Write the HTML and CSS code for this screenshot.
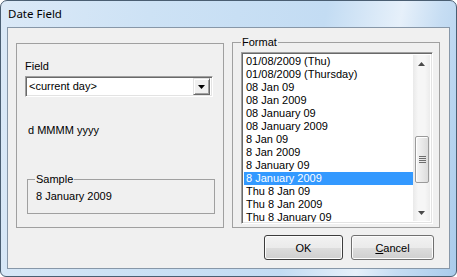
FILE: index.html
```html
<!DOCTYPE html>
<html>
<head>
<meta charset="utf-8">
<link rel="stylesheet" href="styles.css">
</head>
<body>
<div class="window">
  <div class="titlebar">Date Field</div>
  <div class="client">
    <div class="panels">
      <div class="panel-left">
        <div class="label">Field</div>
        <div class="combo">
          <span class="combo-text">&lt;current day&gt;</span>
          <span class="combo-btn"><svg width="7" height="4" viewBox="0 0 7 4"><path d="M0 0h7L3.5 4z" fill="#000"/></svg></span>
        </div>
        <div class="fmt">d MMMM yyyy</div>
        <fieldset class="sample">
          <legend>Sample</legend>
          <div class="sample-text">8 January 2009</div>
        </fieldset>
      </div>
      <fieldset class="format">
        <legend>Format</legend>
        <div class="listbox">
          <div class="items">
            <div class="item">01/08/2009 (Thu)</div>
            <div class="item">01/08/2009 (Thursday)</div>
            <div class="item">08 Jan 09</div>
            <div class="item">08 Jan 2009</div>
            <div class="item">08 January 09</div>
            <div class="item">08 January 2009</div>
            <div class="item">8 Jan 09</div>
            <div class="item">8 Jan 2009</div>
            <div class="item">8 January 09</div>
            <div class="item selected">8 January 2009</div>
            <div class="item">Thu 8 Jan 09</div>
            <div class="item">Thu 8 Jan 2009</div>
            <div class="item">Thu 8 January 09</div>
          </div>
          <div class="scrollbar">
            <div class="arrow"><svg width="7" height="4" viewBox="0 0 7 4"><path d="M3.5 0L7 4H0z" fill="#4a4a4a"/></svg></div>
            <div class="track">
              <div class="thumb">
                <span class="grip"></span><span class="grip"></span><span class="grip"></span><span class="grip"></span>
              </div>
            </div>
            <div class="arrow"><svg width="7" height="4" viewBox="0 0 7 4"><path d="M0 0h7L3.5 4z" fill="#4a4a4a"/></svg></div>
          </div>
        </div>
      </fieldset>
    </div>
    <div class="buttons">
      <div class="btn btn-ok">OK</div>
      <div class="btn btn-cancel"><u>C</u>ancel</div>
    </div>
  </div>
</div>
</body>
</html>
```
FILE: styles.css
```css
html, body {
  margin: 0;
  padding: 0;
  background: #ffffff;
}

.window {
  width: 457px;
  height: 277px;
  box-sizing: border-box;
  border: 1px solid #4a5e72;
  border-radius: 7px 7px 6px 6px;
  background: linear-gradient(100deg, #dbe9f7 0%, #cde2f5 30%, #c3dcf3 65%, #e6f0fa 80%, #c6ddf3 88%, #a9cbeb 100%);
  overflow: hidden;
  display: flex;
  flex-direction: column;
  font-family: "Liberation Sans", Arial, sans-serif;
  font-size: 11px;
  color: #000;
}

.titlebar {
  height: 26px;
  line-height: 26px;
  padding-left: 7px;
  font-family: "Noto Sans", "Open Sans", sans-serif;
  font-size: 11.5px;
  color: #000;
}

.client {
  margin: 0 6px;
  height: 242px;
  box-sizing: border-box;
  border: 1px solid #8797a8;
  background: #f0f0f0;
  padding: 8px 8px 0 8px;
  display: flex;
  flex-direction: column;
}

.panels {
  display: flex;
  align-items: flex-start;
  gap: 8px;
}

.panel-left {
  margin-top: 7px;
  width: 208px;
  height: 185px;
  box-sizing: border-box;
  border: 1px solid #a0a0a0;
  padding: 16px 0 0 8px;
}

.label {
  line-height: 13px;
}

.combo {
  margin-top: 3px;
  width: 188px;
  height: 21px;
  box-sizing: border-box;
  border-top: 1px solid #a0a0a0;
  border-left: 1px solid #a0a0a0;
  border-right: 1px solid #ffffff;
  border-bottom: 1px solid #ffffff;
  box-shadow: inset 1px 1px 0 #696969, inset -1px -1px 0 #e3e3e3;
  background: #ffffff;
  display: flex;
  align-items: center;
  padding: 2px 2px 2px 3px;
}

.combo-text {
  flex: 1;
  line-height: 13px;
}

.combo-btn {
  width: 17px;
  height: 17px;
  box-sizing: border-box;
  background: #f0f0f0;
  border-top: 1px solid #e3e3e3;
  border-left: 1px solid #e3e3e3;
  border-right: 1px solid #696969;
  border-bottom: 1px solid #696969;
  box-shadow: inset 1px 1px 0 #ffffff, inset -1px -1px 0 #a0a0a0;
  display: flex;
  align-items: center;
  justify-content: center;
}

.fmt {
  margin-top: 27px;
  margin-left: 3px;
  line-height: 13px;
}

fieldset {
  margin: 0;
  border: 1px solid #a0a0a0;
  min-width: 0;
}

legend {
  padding: 0 1px;
  line-height: 13px;
}

.sample {
  margin-top: 36px;
  margin-left: 2px;
  width: 188px;
  box-sizing: border-box;
  padding: 4px 0 10px 7px;
}

.sample-text {
  margin-left: 1px;
  line-height: 13px;
}

.format {
  width: 208px;
  box-sizing: border-box;
  padding: 3px 6px 3px 8px;
}

.listbox {
  width: 192px;
  height: 172px;
  box-sizing: border-box;
  border-top: 1px solid #a0a0a0;
  border-left: 1px solid #a0a0a0;
  border-right: 1px solid #ffffff;
  border-bottom: 1px solid #ffffff;
  box-shadow: inset 1px 1px 0 #696969, inset -1px -1px 0 #e3e3e3;
  background: #ffffff;
  padding: 1px 2px 1px 2px;
  display: flex;
  overflow: hidden;
}

.items {
  flex: 1;
  overflow: hidden;
  padding-top: 1px;
}

.item {
  height: 13px;
  line-height: 13px;
  padding-left: 2px;
  white-space: nowrap;
}

.item.selected {
  background: #3399ff;
  color: #ffffff;
}

.scrollbar {
  width: 17px;
  margin-top: 1px;
  margin-bottom: 1px;
  display: flex;
  flex-direction: column;
  background: linear-gradient(to right, #e9e9e9, #f6f6f6 30%, #f6f6f6 70%, #ececec);
}

.arrow {
  height: 17px;
  display: flex;
  align-items: center;
  justify-content: center;
}

.track {
  flex: 1;
  padding-top: 64px;
}

.thumb {
  margin: 0 1px 0 2px;
  height: 47px;
  box-sizing: border-box;
  border: 1px solid #9a9a9a;
  border-radius: 2px;
  background: linear-gradient(to right, #f6f6f6, #e9e9e9 50%, #dcdcdc);
  box-shadow: inset 1px 1px 0 #ffffff;
  display: flex;
  flex-direction: column;
  align-items: center;
  justify-content: center;
  gap: 1px;
}

.grip {
  display: block;
  width: 7px;
  height: 1px;
  background: #6d6d6d;
}

.buttons {
  margin-top: 7px;
  display: flex;
  justify-content: flex-end;
  gap: 8px;
  padding-right: 7px;
}

.btn {
  height: 25px;
  box-sizing: border-box;
  border: 1px solid #707070;
  border-radius: 3px;
  background: linear-gradient(to bottom, #f2f2f2 0%, #ebebeb 50%, #dddddd 51%, #cfcfcf 100%);
  box-shadow: inset 0 0 0 1px #fcfcfc;
  display: flex;
  align-items: center;
  justify-content: center;
  font-size: 11px;
}

.btn-ok {
  width: 79px;
  border-color: #3c3c3c;
}

.btn-cancel {
  width: 83px;
}
```
